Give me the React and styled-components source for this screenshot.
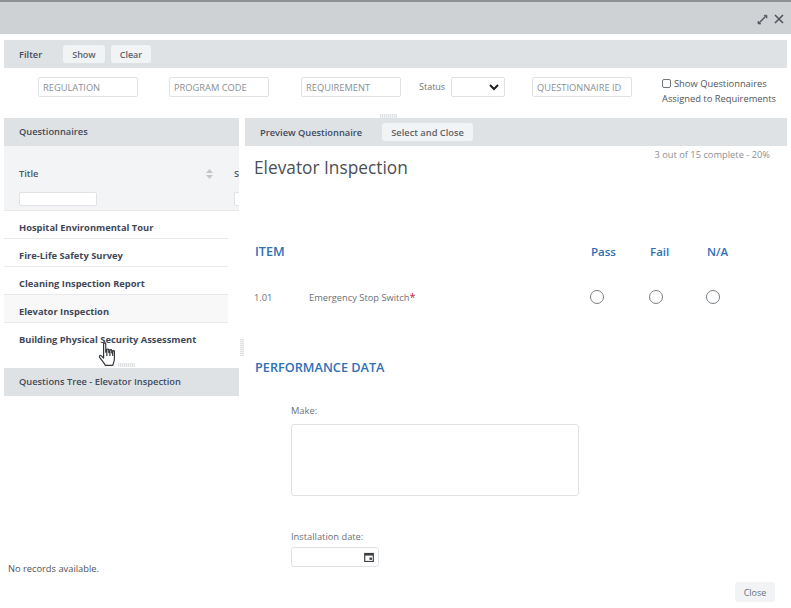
import React from "react";
import styled, { createGlobalStyle } from "styled-components";

const GlobalStyle = createGlobalStyle`
  html, body {
    margin: 0;
    padding: 0;
    background: #ffffff;
  }
  * {
    box-sizing: border-box;
  }
`;

const Page = styled.div`
  position: relative;
  display: flex;
  flex-direction: column;
  width: 791px;
  height: 608px;
  overflow: hidden;
  background: #ffffff;
  font-family: "Open Sans", "Liberation Sans", sans-serif;
  color: #495057;
`;

const TitleBar = styled.div`
  display: flex;
  justify-content: flex-end;
  align-items: center;
  gap: 6px;
  height: 34px;
  padding: 2px 7px 0 0;
  background: #ced2d5;
  border-top: 2px solid #8e9092;
`;

const IconButton = styled.span`
  display: flex;
  color: #50555a;
`;

const Content = styled.div`
  display: flex;
  flex: 1;
  flex-direction: column;
  min-height: 0;
  padding: 6px 4px 0;
`;

const Bar = styled.div`
  display: flex;
  align-items: center;
  height: 28px;
  flex-shrink: 0;
  background: #dfe2e5;
  padding-left: 15px;
  padding-bottom: ${(props) => props.$lift || 0}px;
  font-size: 9.3px;
  font-weight: 600;
  color: #414b5c;
`;

const FilterButton = styled.button`
  height: 18px;
  margin-left: ${(props) => props.$gap}px;
  padding: 0 9px;
  border: none;
  border-radius: 3px;
  background: #f1f3f5;
  font-family: inherit;
  font-size: ${(props) => props.$size || 9}px;
  font-weight: 600;
  color: #5c636a;
`;

const FilterFields = styled.div`
  display: flex;
  align-items: flex-start;
  height: 50px;
  padding: 9px 0 0 34px;
  flex-shrink: 0;
`;

const TextBox = styled.input`
  width: 100px;
  height: 20px;
  margin-left: ${(props) => props.$gap || 0}px;
  padding: 0 4px;
  border: 1px solid #dfe2e5;
  border-radius: 2px;
  background: #ffffff;
  font-family: inherit;
  font-size: 9.3px;
  outline: none;
  &::placeholder {
    color: #8a9095;
    opacity: 1;
  }
`;

const StatusLabel = styled.span`
  margin: 3px 0 0 18px;
  width: 32px;
  font-size: 9px;
  color: #6c7278;
`;

const StatusSelect = styled.div`
  display: flex;
  justify-content: flex-end;
  align-items: center;
  width: 54px;
  height: 20px;
  padding-right: 5px;
  border: 1px solid #dfe2e5;
  border-radius: 2px;
`;

const AssignedBox = styled.div`
  width: 125px;
  margin: -1px 0 0 30px;
  font-size: 9.35px;
  line-height: 15px;
  color: #50565c;
  white-space: nowrap;
`;

const CheckLine = styled.label`
  display: flex;
  align-items: center;
  gap: 3px;
`;

const CheckBox = styled.span`
  width: 9px;
  height: 9px;
  border: 1px solid #70757a;
  border-radius: 2px;
  background: #ffffff;
`;

const Panels = styled.div`
  display: grid;
  flex: 1;
  grid-template-columns: 235px 1fr;
  gap: 6px;
  min-height: 0;
`;

const LeftPanel = styled.section`
  display: flex;
  flex-direction: column;
  padding-bottom: 33px;
`;

const TableHead = styled.div`
  display: grid;
  grid-template-columns: 215px 1fr;
  height: 65px;
  flex-shrink: 0;
  overflow: hidden;
  background: #f3f4f6;
  border-bottom: 1px solid #e6e8ea;
`;

const HeadCell = styled.div`
  display: flex;
  flex-direction: column;
  gap: 13px;
  padding: 22px 0 0 15px;
  white-space: nowrap;
`;

const HeadTitle = styled.div`
  display: flex;
  justify-content: space-between;
  align-items: center;
  height: 11px;
  padding-right: 6px;
  font-size: 9.3px;
  font-weight: 600;
  color: #4c5562;
`;

const HeadFilter = styled.input`
  flex-shrink: 0;
  width: 78px;
  height: 14px;
  border: 1px solid #e0e2e5;
  border-radius: 2px;
  background: #ffffff;
`;

const RowList = styled.div`
  display: flex;
  flex-direction: column;
  width: 224px;
  margin-bottom: 17px;
`;

const Row = styled.div`
  display: flex;
  align-items: center;
  height: 28px;
  padding: ${(props) => (props.$last ? 5 : 6)}px 0 0 15px;
  border-bottom: ${(props) => (props.$last ? "none" : "1px solid #e8e9eb")};
  background: ${(props) => (props.$active ? "#f8f8f9" : "#ffffff")};
  font-size: 9.35px;
  font-weight: 700;
  color: #3f4858;
  white-space: nowrap;
`;

const NoRecords = styled.div`
  margin-top: auto;
  padding-left: 4px;
  font-size: 9.3px;
  color: #4e5358;
`;

const RightPanel = styled.section`
  display: flex;
  flex-direction: column;
`;

const PreviewBody = styled.div`
  display: flex;
  flex: 1;
  flex-direction: column;
  padding: 3px 17px 0 9px;
`;

const Progress = styled.div`
  align-self: flex-end;
  height: 7px;
  font-size: 9.3px;
  line-height: 12px;
  color: #8b9095;
`;

const Heading = styled.h1`
  margin: 0;
  height: 24px;
  font-size: 17.3px;
  font-weight: 400;
  line-height: 24px;
  color: #4a4f55;
`;

const ItemHead = styled.div`
  display: grid;
  grid-template-columns: 336px 59px 57px 1fr;
  align-items: center;
  margin: 62px 0 0 1px;
  height: 18px;
  font-size: 11.5px;
  font-weight: 600;
  color: #2f6fb5;
`;

const ItemLabel = styled.span`
  font-size: 12.7px;
`;

const ItemRow = styled.div`
  display: grid;
  grid-template-columns: 55px 281px 59px 57px 1fr;
  align-items: center;
  height: 16px;
  margin-top: 29px;
  font-size: 9.3px;
  color: #6c7177;
`;

const Required = styled.span`
  color: #c0243a;
  font-size: 11px;
  line-height: 8px;
`;

const Radio = styled.span`
  display: block;
  width: 14px;
  height: 14px;
  border: 1px solid #7b7f84;
  border-radius: 50%;
  background: #ffffff;
`;

const SectionTitle = styled.h2`
  margin: 53px 0 0 1px;
  height: 18px;
  font-size: 12.7px;
  font-weight: 600;
  line-height: 18px;
  color: #2f6fb5;
`;

const FieldGroup = styled.div`
  display: flex;
  flex-direction: column;
  gap: ${(props) => props.$gap}px;
  margin: ${(props) => props.$top}px 0 0 37px;
`;

const FieldLabel = styled.label`
  height: 12px;
  font-size: 9.3px;
  line-height: 12px;
  color: #6c7177;
`;

const TextArea = styled.div`
  width: 288px;
  height: 72px;
  border: 1px solid #dfe2e5;
  border-radius: 3px;
`;

const DateBox = styled.div`
  display: flex;
  justify-content: flex-end;
  align-items: center;
  width: 88px;
  height: 20px;
  padding-right: 4px;
  border: 1px solid #dfe2e5;
  border-radius: 3px;
  color: #3c4043;
`;

const CloseButton = styled.button`
  align-self: flex-end;
  width: 40px;
  height: 20px;
  margin: 15px -5px 0 0;
  border: none;
  border-radius: 3px;
  background: #f1f3f5;
  font-family: inherit;
  font-size: 9px;
  color: #6c7177;
`;

const Grip = styled.span`
  position: absolute;
  left: ${(props) => props.$x}px;
  top: ${(props) => props.$y}px;
  width: ${(props) => (props.$vertical ? 4 : 17)}px;
  height: ${(props) => (props.$vertical ? 17 : 4)}px;
  background: repeating-linear-gradient(
    ${(props) => (props.$vertical ? "0deg" : "90deg")},
    #dfe2e5 0 1px,
    #f3f4f5 1px 2px
  );
`;

const HandCursor = styled.svg`
  position: absolute;
  left: 98px;
  top: 342px;
`;

const rows = [
  "Hospital Environmental Tour",
  "Fire-Life Safety Survey",
  "Cleaning Inspection Report",
  "Elevator Inspection",
  "Building Physical Security Assessment",
];

const SortIcon = () => (
  <svg width="7" height="10" viewBox="0 0 7 10" fill="#c3c7cb">
    <path d="M3.5 0 7 4H0zM0 6h7l-3.5 4z" />
  </svg>
);

const App = () => {
  return (
    <Page>
      <GlobalStyle />
      <TitleBar>
        <IconButton>
          <svg width="11" height="11" viewBox="0 0 11 11" fill="currentColor" stroke="currentColor">
            <path d="M7 1.2H10V4.2zM1 10V7L4 10z" strokeWidth="0.6" />
            <path d="M2.8 8.2 8.2 2.8" strokeWidth="1.4" />
          </svg>
        </IconButton>
        <IconButton>
          <svg width="10" height="10" viewBox="0 0 10 10" stroke="currentColor" strokeWidth="1.6" fill="none">
            <path d="M1 1 9 9M9 1 1 9" />
          </svg>
        </IconButton>
      </TitleBar>
      <Content>
        <Bar>
          Filter
          <FilterButton $gap={21}>Show</FilterButton>
          <FilterButton $gap={6}>Clear</FilterButton>
        </Bar>
        <FilterFields>
          <TextBox placeholder="REGULATION" />
          <TextBox placeholder="PROGRAM CODE" $gap={31} />
          <TextBox placeholder="REQUIREMENT" $gap={32} />
          <StatusLabel>Status</StatusLabel>
          <StatusSelect>
            <svg width="10" height="7" viewBox="0 0 10 7" fill="none" stroke="#1f2225" strokeWidth="2">
              <path d="M1 1 5 5 9 1" />
            </svg>
          </StatusSelect>
          <TextBox placeholder="QUESTIONNAIRE ID" $gap={27} />
          <AssignedBox>
            <CheckLine>
              <CheckBox />
              Show Questionnaires
            </CheckLine>
            Assigned to Requirements
          </AssignedBox>
        </FilterFields>
        <Panels>
          <LeftPanel>
            <Bar $lift={2}>Questionnaires</Bar>
            <TableHead>
              <HeadCell>
                <HeadTitle>
                  Title
                  <SortIcon />
                </HeadTitle>
                <HeadFilter />
              </HeadCell>
              <HeadCell>
                <HeadTitle>S</HeadTitle>
                <HeadFilter />
              </HeadCell>
            </TableHead>
            <RowList>
              {rows.map((title, i) => (
                <Row key={title} $active={i === 3} $last={i === 4}>
                  {title}
                </Row>
              ))}
            </RowList>
            <Bar $lift={2}>Questions Tree - Elevator Inspection</Bar>
            <NoRecords>No records available.</NoRecords>
          </LeftPanel>
          <RightPanel>
            <Bar>
              Preview Questionnaire
              <FilterButton $gap={20} $size={9.3}>Select and Close</FilterButton>
            </Bar>
            <PreviewBody>
              <Progress>3 out of 15 complete - 20%</Progress>
              <Heading>Elevator Inspection</Heading>
              <ItemHead>
                <ItemLabel>ITEM</ItemLabel>
                <span>Pass</span>
                <span>Fail</span>
                <span>N/A</span>
              </ItemHead>
              <ItemRow>
                <span>1.01</span>
                <span>
                  Emergency Stop Switch<Required>*</Required>
                </span>
                <Radio />
                <Radio />
                <Radio />
              </ItemRow>
              <SectionTitle>PERFORMANCE DATA</SectionTitle>
              <FieldGroup $top={29} $gap={7}>
                <FieldLabel>Make:</FieldLabel>
                <TextArea />
              </FieldGroup>
              <FieldGroup $top={35} $gap={4}>
                <FieldLabel>Installation date:</FieldLabel>
                <DateBox>
                  <svg width="10" height="10" viewBox="0 0 10 10" fill="none">
                    <rect x="0.7" y="1.5" width="8.6" height="8" stroke="currentColor" strokeWidth="1.2" />
                    <path d="M0.7 2.8H9.3" stroke="currentColor" strokeWidth="1.6" />
                    <rect x="5.5" y="5.5" width="2.4" height="2.4" fill="currentColor" />
                  </svg>
                </DateBox>
              </FieldGroup>
              <CloseButton>Close</CloseButton>
            </PreviewBody>
          </RightPanel>
        </Panels>
      </Content>
      <Grip $x={380} $y={114} />
      <Grip $x={118} $y={363} />
      <Grip $x={240} $y={339} $vertical />
      <HandCursor width="22" height="26" viewBox="0 0 20 24" fill="#ffffff" stroke="#33373b" strokeWidth="1.1" strokeLinejoin="round">
        <path d="M5 1.5C5 0.6 7 0.6 7 1.5V9.5L8 9.2V7.2C8 6.3 9.8 6.3 9.8 7.2V9.6L10.8 9.7V7.8C10.8 6.9 12.5 6.9 12.5 7.8V10L13.4 10.2V8.7C13.4 7.8 15 7.8 15 8.7V15C15 18 14 20 13.5 21.5H6.5C5.5 19.5 3.5 17 1.5 14.5 0.5 13 1.8 11.8 3 12.8L5 14.8z" />
        <path d="M8 9.5V13M10.8 9.8V13M13.4 10.2V13" />
      </HandCursor>
    </Page>
  );
};

export default App;
